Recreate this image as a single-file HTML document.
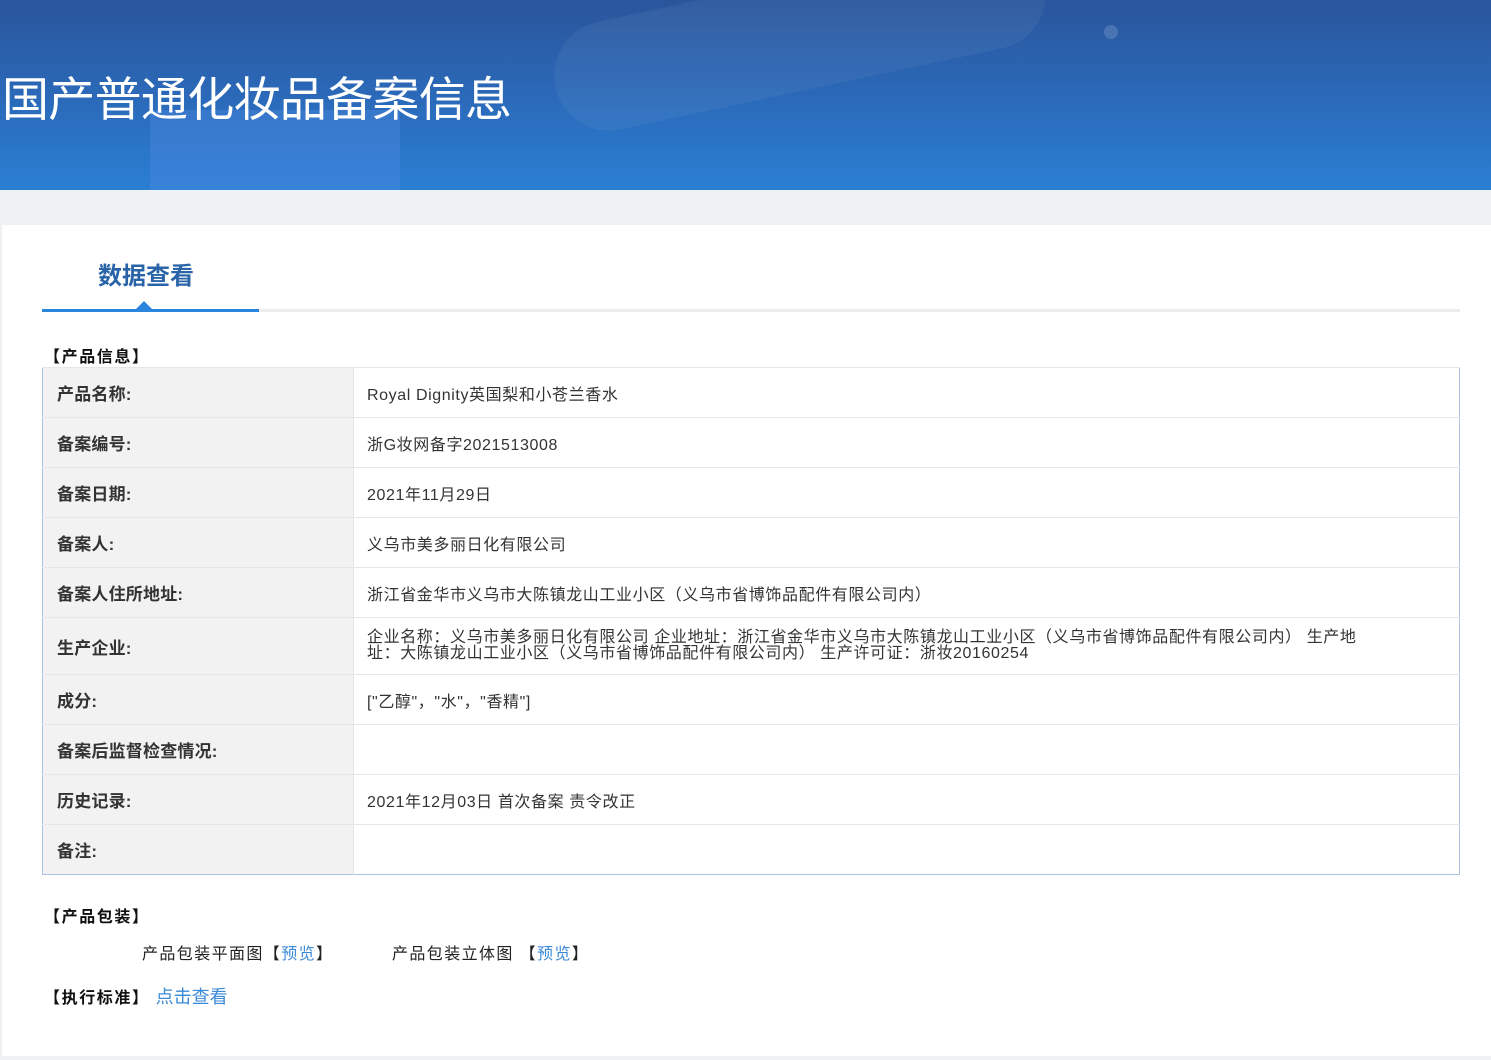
<!DOCTYPE html>
<html><head><meta charset="utf-8"><style>
*{margin:0;padding:0;box-sizing:border-box}
body{width:1491px;height:1060px;background:#eef2f5;font-family:"Liberation Sans","Noto Sans CJK SC",sans-serif;color:#333;position:relative;overflow:hidden}
.hdr{position:absolute;left:0;top:0;width:1491px;height:190px;background:linear-gradient(180deg,#2a559c 0%,#2b6bbb 55%,#2a7fd3 100%);overflow:hidden}
.hdr h1{position:absolute;left:2px;top:70px;font-size:47px;font-weight:normal;color:#fff;letter-spacing:-0.7px;line-height:60px}
.card{position:absolute;left:2px;top:225px;width:1489px;height:831px;background:#fff}
.tab{position:absolute;left:98px;top:256px;font-size:24px;font-weight:bold;color:#2a64a8}
.ln{position:absolute;top:309px;height:3px}
.tri{position:absolute;left:136px;top:301px;width:0;height:0;border-left:8px solid transparent;border-right:8px solid transparent;border-bottom:8px solid #2a86dc}
.sec{position:absolute;font-size:16px;font-weight:bold;color:#111;letter-spacing:1.6px}
table{position:absolute;left:42px;top:367px;width:1418px;border-collapse:collapse;border:1px solid #a9c3e6;font-size:16px}
td{border-top:1px solid #e6e6e6;height:50px;vertical-align:middle}
td.l{width:311px;background:#f2f2f2;font-weight:bold;padding-left:14px;border-right:1px solid #e6e6e6;font-size:17px;letter-spacing:0.2px}
td.v{padding-left:13px;padding-right:95px;letter-spacing:0.6px}
.lk{color:#3b8ad8}
.t{position:absolute;font-size:16px;color:#222;letter-spacing:1.4px}
</style></head><body>
<div class="hdr">
<div style="position:absolute;left:550px;top:-20px;width:500px;height:110px;border-radius:60px;background:rgba(255,255,255,0.05);transform:rotate(-12deg)"></div>
<div style="position:absolute;left:150px;top:110px;width:250px;height:80px;background:rgba(80,140,230,0.35)"></div>
<div style="position:absolute;left:1104px;top:25px;width:14px;height:14px;border-radius:50%;background:rgba(255,255,255,0.15)"></div>
<h1>国产普通化妆品备案信息</h1></div>
<div class="card"></div>
<div class="tab">数据查看</div>
<div class="ln" style="left:42px;width:217px;background:#2a86dc"></div>
<div class="ln" style="left:259px;width:1201px;background:#ececec"></div>
<div class="tri"></div>
<div class="sec" style="left:44px;top:343px">【产品信息】</div>
<table>
<tr><td class="l">产品名称:</td><td class="v">Royal Dignity英国梨和小苍兰香水</td></tr>
<tr><td class="l">备案编号:</td><td class="v">浙G妆网备字2021513008</td></tr>
<tr><td class="l">备案日期:</td><td class="v">2021年11月29日</td></tr>
<tr><td class="l">备案人:</td><td class="v">义乌市美多丽日化有限公司</td></tr>
<tr><td class="l">备案人住所地址:</td><td class="v">浙江省金华市义乌市大陈镇龙山工业小区（义乌市省博饰品配件有限公司内）</td></tr>
<tr><td class="l" style="height:57px">生产企业:</td><td class="v" style="line-height:16px">企业名称：义乌市美多丽日化有限公司 企业地址：浙江省金华市义乌市大陈镇龙山工业小区（义乌市省博饰品配件有限公司内） 生产地址：大陈镇龙山工业小区（义乌市省博饰品配件有限公司内） 生产许可证：浙妆20160254</td></tr>
<tr><td class="l">成分:</td><td class="v">["乙醇"，"水"，"香精"]</td></tr>
<tr><td class="l">备案后监督检查情况:</td><td class="v"></td></tr>
<tr><td class="l">历史记录:</td><td class="v">2021年12月03日 首次备案 责令改正</td></tr>
<tr><td class="l">备注:</td><td class="v"></td></tr>
</table>
<div class="sec" style="left:44px;top:903px">【产品包装】</div>
<div class="t" style="left:142px;top:940px">产品包装平面图【<span class="lk">预览</span>】</div>
<div class="t" style="left:392px;top:940px">产品包装立体图 【<span class="lk">预览</span>】</div>
<div class="sec" style="left:44px;top:983px">【执行标准】 <span class="lk" style="font-weight:normal;font-size:18px;letter-spacing:0">点击查看</span></div>
</body></html>
